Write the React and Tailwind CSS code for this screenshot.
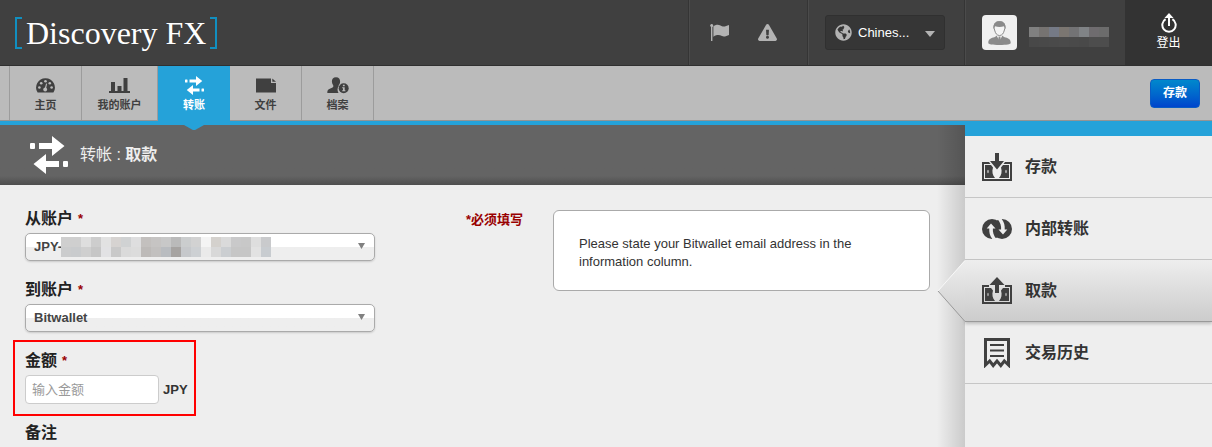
import React, { useState } from "react";
import { FaExclamationTriangle, FaGlobeAmericas } from "react-icons/fa";

const Icons = {
  Dashboard: () => (
    <svg width="19" height="15" viewBox="0 0 19 15" fill="currentColor">
      <path d="M9.500 0.300a9.300 9.300 0 0 0-7.900 14.300h15.800A9.300 9.300 0 0 0 9.500 0.300z" />
      <g className="text-[#bbbbbb]" fill="currentColor">
        <circle cx="3.400" cy="9.500" r="1.300" />
        <circle cx="5.200" cy="5.200" r="1.300" />
        <circle cx="9.500" cy="3.300" r="1.300" />
        <circle cx="13.800" cy="5.200" r="1.300" />
        <circle cx="15.600" cy="9.500" r="1.300" />
        <circle cx="9.200" cy="11.500" r="1.900" />
        <path d="M8.600 11l1.500-5.600 1 .3-1.200 5.600z" />
      </g>
    </svg>
  ),
  Chart: () => (
    <svg width="21" height="15" viewBox="0 0 21 15" fill="currentColor">
      <path d="M0 13h21v2H0zM2 4h4v9H2zM8.500 8h4v5h-4zM14.500 0h4v13h-4z" />
    </svg>
  ),
  Transfer: ({ className }) => (
    <svg className={className} viewBox="0 0 38 38" fill="currentColor">
      <rect x="0" y="7" width="5" height="6" rx="1" />
      <path d="M9 7h13V0l12.500 10L22 20v-7H9z" />
      <rect x="33" y="25" width="5" height="6" rx="1" />
      <path d="M29 25H16v-7L3.500 28 16 38v-7h13z" />
    </svg>
  ),
  File: () => (
    <svg width="20" height="15" viewBox="0 0 20 15" fill="currentColor">
      <path d="M0 .5h15v4.500h5V14.500H0zM16.300 0.500L20 3.800h-3.700z" />
    </svg>
  ),
  Profile: () => (
    <svg width="22" height="17" viewBox="0 0 22 17" fill="currentColor">
      <path d="M9 .3c2.800 0 4.300 1.900 4.100 4.500-.1 1.600-.8 2.900-1.500 3.600v1.200c-1.400 1.500-1.400 4.200-.1 6.400H.3c0-2.600.7-3.600 3-4.500 1.900-.7 3-1.100 3-2V8.400C5.500 7.500 5 6.300 4.900 4.800 4.700 2.200 6.200.3 9 .3z" />
      <circle cx="16.700" cy="11.200" r="5" />
      <path
        className="text-[#bbbbbb]"
        fill="currentColor"
        d="M15.900 7.800h1.800v1.500h-1.800zM15.200 10.200h2.500v3h.7v1h-3.200v-1h.8v-2h-.8z"
      />
    </svg>
  ),
  Flag: () => (
    <svg width="20" height="17" viewBox="0 0 20 17" fill="currentColor">
      <path d="M1 .5h1.400V17H1z" />
      <circle cx="1.700" cy="1.500" r="1.500" />
      <path d="M3.400 2.300C8-.5 9.500 1.200 12 2.200c2.400.8 4.500-.6 7-1.300v10c-2.400.9-4.600 2.200-7 1.200-2.700-1.200-4.500-1.700-8.600.6z" />
    </svg>
  ),
  Avatar: () => (
    <svg width="23" height="24" viewBox="0 0 23 24">
      <path d="M6 7C6 2.500 8 .5 11.500 .5S17 2.500 17 7l-.6 2c-.8 3.500-2.400 5.500-4.900 5.500S7.400 12.500 6.600 9z" fill="#f4f4f4" stroke="#8a8a8a" />
      <path d="M5.500 8C5 3 7 .2 11.500 .2S18 3 17.500 8L16 5.300c-3 .8-6 .8-9 0z" fill="#8a8a8a" />
      <path d="M.3 22c0-3.500 2-4.600 5-5.400 1.500-.4 2.600-1 3.200-2l3 5.200 3-5.200c.6 1 1.700 1.600 3.200 2 3 .8 5 1.900 5 5.400 0 1.300-4 2-11.200 2S.3 23.300.3 22z" fill="#8a8a8a" />
      <path d="M10.700 15.500h1.600l.5 3.500-1.300 3-1.300-3z" fill="#8a8a8a" />
    </svg>
  ),
  Logout: () => (
    <svg width="16" height="20" viewBox="0 0 16 20" fill="none">
      <path d="M4.600 6.200a6.700 6.700 0 1 0 6.800 0" stroke="currentColor" strokeWidth="2" />
      <path d="M8 3v10" stroke="currentColor" strokeWidth="2" />
      <path d="M8 0l4.500 5h-9z" fill="currentColor" />
    </svg>
  ),
  Deposit: () => (
    <svg width="30" height="28" viewBox="0 0 30 28" fill="currentColor">
      <path d="M0 9h7l1.500 2H2v15h26V11h-6.500L23 9h7v19H0z" />
      <path d="M3 12h6l2 2.500c-1.300 4-.5 7.500 2 10.500H3zM27 12h-6l-2 2.500c1.300 4 .5 7.500-2 10.500h10z" />
      <path d="M13 0h4v8h5l-7 8.500L8 8h5z" />
      <ellipse cx="6" cy="18.500" rx="1" ry="1.700" fill="#aaa" />
      <ellipse cx="24" cy="18.500" rx="1" ry="1.700" fill="#aaa" />
    </svg>
  ),
  Internal: () => (
    <svg width="30" height="20" viewBox="0 0 30 20" fill="currentColor">
      <circle cx="10" cy="10" r="10" />
      <circle cx="20" cy="10" r="10" />
      <g className="text-[#eeeeee]" fill="currentColor">
        <path d="M9 4.500L13.500 9.500h-2.600c-.3 3.500.6 7 3.600 10.500h-4.200C7.800 17 7 13 7.300 9.500H4.700z" />
        <path d="M21 15.500L16.500 10.500h2.600c.3-3.500-.6-7-3.600-10.500h4.200c2.500 3 3.300 7 3 10.500h2.600z" />
      </g>
    </svg>
  ),
  Withdraw: () => (
    <svg width="30" height="27" viewBox="0 0 30 27" fill="currentColor">
      <path d="M0 8h7v2H2v15h26V10h-5V8h7v19H0z" />
      <path d="M3 11h6l2 2.500c-1.300 4-.5 7.500 2 10.500H3zM27 11h-6l-2 2.500c1.300 4 .5 7.500-2 10.500h10z" />
      <path d="M15 0l7.500 8H17v8h-4V8H7.500z" />
      <ellipse cx="6" cy="17.500" rx="1" ry="1.700" fill="#999" />
      <ellipse cx="24" cy="17.500" rx="1" ry="1.700" fill="#999" />
    </svg>
  ),
  History: () => (
    <svg width="26" height="30" viewBox="0 0 26 30" fill="none" stroke="currentColor">
      <path d="M1.500 27V1.500h23V27l-4.200-4-3.500 4.500-3.800-4.500-3.800 4.500-3.500-4.500z" strokeWidth="3" />
      <path d="M6 7h14M6 12.500h14M6 18h14" strokeWidth="2" />
    </svg>
  ),
};

// Masked account number and user name, one colour per cell
const accountMask = [
  ["#cfcfcf", "#cfcfcf", "#dedede", "#cdcdcd", "#e2e2e2", "#d6d3d1", "#d0d2d3", "#dededf", "#c3c0be", "#c6c4c3", "#c8c8c8", "#bababa", "#cbcdce", "#d2d2d2", "#f4f4f4", "#d4d1cd", "#dadada", "#c9c9ca", "#c8c8c8", "#dedede", "#c9cacc"],
  ["#cbcccd", "#c9cbcd", "#cfcfcf", "#c6c6c6", "#e2e2e4", "#c9c9c9", "#dadada", "#dcdcdc", "#bdbab8", "#c2c0bf", "#b9bcc0", "#a6a3a1", "#c6c8cb", "#cdd0d3", "#eaeaea", "#d8d8d8", "#cbced1", "#c6c6c6", "#c6c6c6", "#e2e2e2", "#c8ccd0"],
];

const userMask = [
  ["#808080", "#767371", "#757a86", "#7b7671", "#737375", "#808386", "#6f6c6f", "#6c6c6c"],
  ["#484848", "#494949", "#4a4a4a", "#4b4b4b", "#4a4a4a", "#494949", "#4d4d4d", "#4d4d4d"],
];

const Mask = ({ rows }) => (
  <div>
    {rows.map((row, r) => (
      <div key={r} className="flex">
        {row.map((color, c) => (
          <span key={c} className="size-[10px]" style={{ backgroundColor: color }} />
        ))}
      </div>
    ))}
  </div>
);

const navItems = [
  { title: "主页", icon: <Icons.Dashboard />, width: "w-[72px]" },
  { title: "我的账户", icon: <Icons.Chart />, width: "w-[76px]" },
  { title: "转账", icon: <Icons.Transfer className="size-[19px]" />, width: "w-[72px]", active: true },
  { title: "文件", icon: <Icons.File />, width: "w-[72px]" },
  { title: "档案", icon: <Icons.Profile />, width: "w-[72px]" },
];

const sideItems = [
  { title: "存款", icon: <Icons.Deposit /> },
  { title: "内部转账", icon: <Icons.Internal /> },
  { title: "取款", icon: <Icons.Withdraw />, active: true },
  { title: "交易历史", icon: <Icons.History /> },
];

const Header = () => (
  <header className="flex h-[66px] border-b border-[#303030] bg-[#404040] text-white">
    <a href="#" className="ml-[15px] flex items-center self-center">
      <span className="h-8 w-[7px] border-2 border-r-0 border-[#118fc0]" />
      <span className="px-1 font-['Liberation_Serif',serif] text-[32px] leading-8 whitespace-nowrap">
        Discovery FX
      </span>
      <span className="h-8 w-[7px] border-2 border-l-0 border-[#118fc0]" />
    </a>

    <div className="ml-auto flex">
      <div className="flex w-[119px] items-center justify-between border-l border-[#353535] pr-[30px] pl-[21px] text-[#b3b3b3] shadow-[inset_1px_0_0_#4b4b4b]">
        <button aria-label="Flag">
          <Icons.Flag />
        </button>
        <button aria-label="Alerts">
          <FaExclamationTriangle size={19} />
        </button>
      </div>

      <div className="flex w-[157px] items-center border-l border-[#353535] pl-[17px] shadow-[inset_1px_0_0_#4b4b4b]">
        <div className="relative">
          <FaGlobeAmericas size={17} className="absolute top-[9px] left-[10px] text-[#b3b3b3]" />
          <select
            aria-label="Language"
            className="h-[35px] w-[120px] appearance-none rounded-[3px] border border-[#303030] bg-[#363636] pl-8 text-[13px] text-white"
          >
            <option>Chines...</option>
          </select>
          <svg width="10" height="6" viewBox="0 0 10 6" className="pointer-events-none absolute top-4 right-[10px] fill-[#b3b3b3]">
            <path d="M0 0h10L5 6z" />
          </svg>
        </div>
      </div>

      <div className="flex w-[161px] items-center gap-3 border-l border-[#353535] pl-[17px] shadow-[inset_1px_0_0_#4b4b4b]">
        <span className="flex size-[35px] items-center justify-center rounded bg-[#f0f0f0]">
          <Icons.Avatar />
        </span>
        <div className="pt-2">
          <Mask rows={userMask} />
        </div>
      </div>

      <button className="flex w-[87px] flex-col items-center bg-[#333333] pt-[13px] text-xs">
        <Icons.Logout />
        <span className="leading-5">登出</span>
      </button>
    </div>
  </header>
);

const Nav = ({ items }) => (
  <nav className="flex h-[55px] items-center border-b border-[#949494] bg-[#bbbbbb] pr-3 pl-[9px]">
    <ul className="flex h-full border-l border-[#9c9c9c]">
      {items.map((item) => (
        <li key={item.title} className={item.width}>
          <a
            href="#"
            className={
              item.active
                ? "relative flex h-[55px] flex-col items-center bg-[#25a2d9] pt-[10px] text-[11px] font-bold text-white"
                : "flex h-full flex-col items-center border-r border-[#9c9c9c] pt-[10px] text-[11px] font-bold text-[#404040]"
            }
          >
            <span className="flex h-[19px] items-center">{item.icon}</span>
            <span className="leading-5">{item.title}</span>
            {item.active && (
              <svg width="20" height="6" viewBox="0 0 20 6" className="absolute top-[58px] z-10 fill-[#25a2d9]">
                <path d="M0 1h20l-8 4.500q-2 1-4 0z" />
              </svg>
            )}
          </a>
        </li>
      ))}
    </ul>
    <button className="ml-auto h-[29px] w-[50px] rounded border border-[#0a5cc4] bg-linear-to-b from-[#0088cc] to-[#0044cc] text-xs font-bold text-white">
      存款
    </button>
  </nav>
);

const Label = ({ htmlFor, children, required }) => (
  <label htmlFor={htmlFor} className="flex h-[26px] items-center gap-[5px] font-bold text-[#222222]">
    {children}
    {required && <span className="text-[13px] text-[#990000]">*</span>}
  </label>
);

const Select = ({ id, value, children }) => (
  <div className="relative mt-px">
    <select
      id={id}
      className="block h-7 w-full appearance-none rounded-[5px] border border-[#aaaaaa] bg-linear-to-b from-white from-50% to-[#eeeeee] to-50% px-2 text-[13px] font-bold text-[#444444] shadow-[0_1px_2px_rgba(0,0,0,0.15)]"
    >
      <option>{value}</option>
    </select>
    {children}
    <svg width="7" height="6" viewBox="0 0 7 6" className="pointer-events-none absolute top-[10px] right-[10px] fill-[#808080]">
      <path d="M0 0h7L3.500 6z" />
    </svg>
  </div>
);

const TransferForm = () => {
  const [amount, setAmount] = useState("");

  return (
    <form className="w-[350px] space-y-4">
      <div>
        <Label htmlFor="from" required>从账户</Label>
        <Select id="from" value="JPY-">
          <div className="pointer-events-none absolute top-1 left-9">
            <Mask rows={accountMask} />
          </div>
        </Select>
      </div>
      <div>
        <Label htmlFor="to" required>到账户</Label>
        <Select id="to" value="Bitwallet" />
      </div>
      <div className="relative w-fit">
        <Label htmlFor="amount" required>金额</Label>
        <div className="mt-px flex items-center gap-1">
          <input
            id="amount"
            value={amount}
            onChange={(e) => setAmount(e.target.value)}
            placeholder="输入金额"
            className="h-[29px] w-[134px] rounded border border-[#cccccc] bg-white px-[6px] text-[13px] placeholder:text-[#999999]"
          />
          <span className="text-[13px] font-bold text-[#333333]">JPY</span>
        </div>
        <div className="pointer-events-none absolute -top-2 -right-2 -bottom-3 -left-3 border-2 border-[#ff0000]" />
      </div>
      <div>
        <Label>备注</Label>
      </div>
    </form>
  );
};

const Sidebar = () => (
  <aside className="relative z-10 w-[247px] shrink-0 border-t-[15px] border-[#25a2d9] bg-[#eeeeee]">
    <ul>
      {sideItems.map((item) => (
        <li key={item.title}>
          <a
            href="#"
            className={
              item.active
                ? "relative flex h-[62px] items-center gap-[13px] border-b border-[#999999] bg-linear-to-b from-[#eeeeee] to-[#cccccc] pl-[17px] shadow-[0_2px_3px_rgba(0,0,0,0.2)]"
                : "flex h-[62px] items-center gap-[13px] border-b border-[#c6c6c6] pl-[17px]"
            }
          >
            {item.active && (
              <svg width="28" height="62" viewBox="0 0 28 62" className="absolute top-0 right-full">
                <defs>
                  <linearGradient id="pointer" x1="0" y1="0" x2="0" y2="1">
                    <stop offset="0" stopColor="#eeeeee" />
                    <stop offset="1" stopColor="#cccccc" />
                  </linearGradient>
                </defs>
                <path d="M28 0L1 31l27 31z" fill="url(#pointer)" />
                <path d="M1 31l27 30.500" fill="none" stroke="#999999" />
                <path d="M28 .5L1 31" fill="none" stroke="#f8f8f8" />
              </svg>
            )}
            <span className="flex w-[30px] justify-center text-[#404040]">{item.icon}</span>
            <span className="font-bold text-[#333333]">{item.title}</span>
          </a>
        </li>
      ))}
    </ul>
  </aside>
);

const App = () => {
  return (
    <div className="flex min-h-screen flex-col overflow-hidden bg-[#eeeeee] font-['Liberation_Sans','Noto_Sans_CJK_SC',sans-serif]">
      <Header />
      <Nav items={navItems} />
      <div className="flex flex-1">
        <main className="relative min-w-0 flex-1 border-t-4 border-[#25a2d9]">
          <div className="flex h-[60px] items-center gap-3 bg-linear-to-b from-[#646464] from-85% to-[#4e4e4e] pl-[30px] text-[#eeeeee]">
            <Icons.Transfer className="size-[38px] text-white" />
            <h1>
              转帐 : <strong>取款</strong>
            </h1>
          </div>
          <div className="flex items-start gap-[30px] pt-[21px] pr-[35px] pl-[25px]">
            <div className="flex w-[498px] justify-between">
              <TransferForm />
              <p className="text-[13px] leading-7 font-bold text-[#990000]">*必须填写</p>
            </div>
            <div className="mt-1 flex-1 rounded-md border border-[#aaaaaa] bg-white pt-6 pr-12 pb-[19px] pl-[25px] text-[13px] leading-[18px] text-[#333333]">
              Please state your Bitwallet email address in the information column.
            </div>
          </div>
          <div className="pointer-events-none absolute inset-y-0 right-0 w-7 bg-linear-to-r from-transparent to-black/15" />
        </main>
        <Sidebar />
      </div>
    </div>
  );
};

export default App;
